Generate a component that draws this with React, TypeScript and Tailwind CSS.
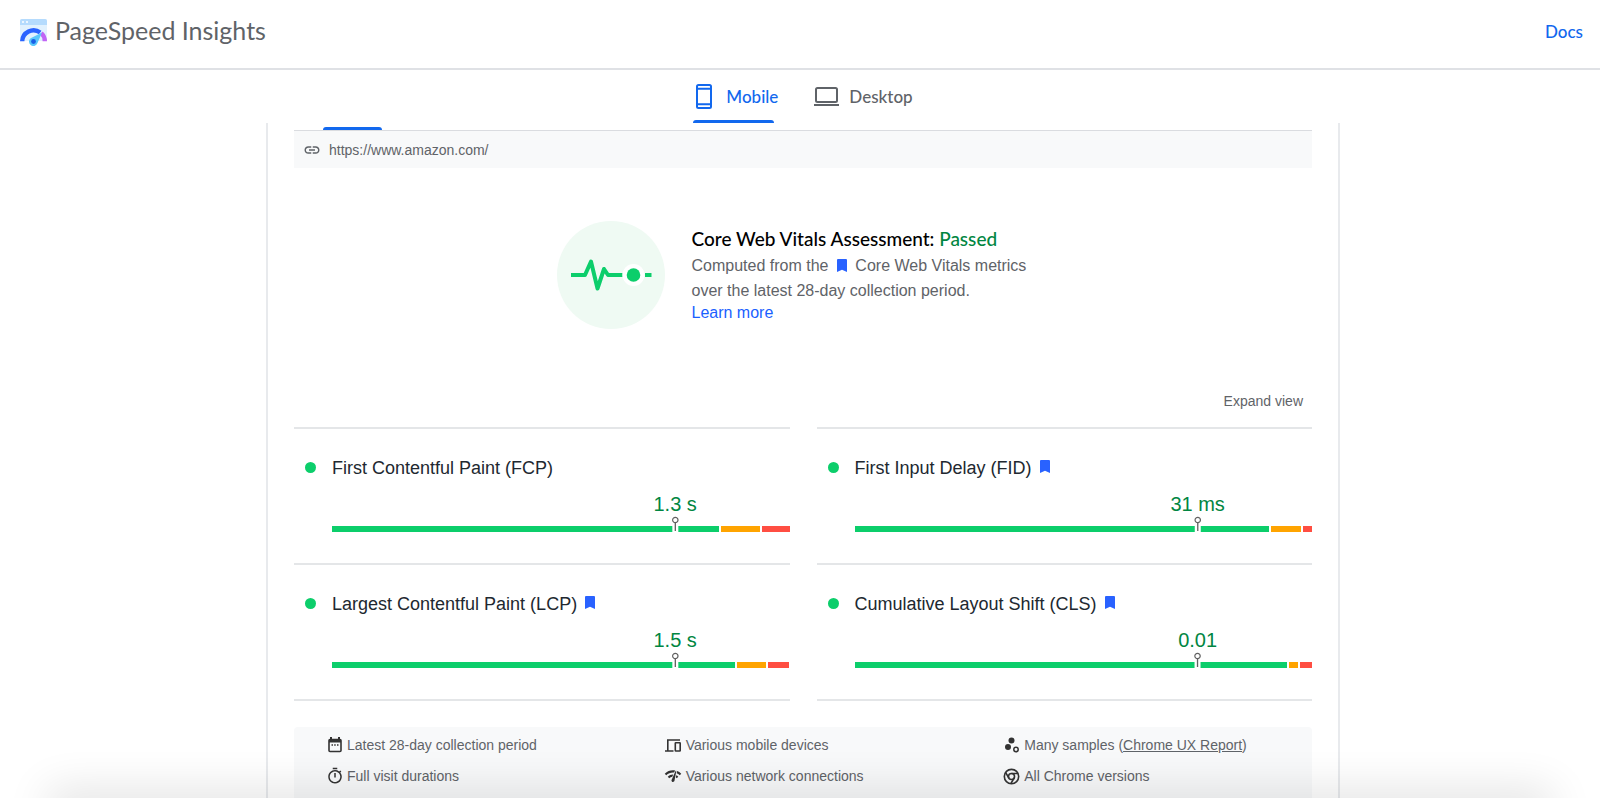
import type { ReactNode } from 'react';
import { MdLink, MdNetworkCheck, MdOutlineTimer } from 'react-icons/md';

interface Metric {
  name: string;
  value: string;
  core: boolean;
  good: number;
  average: number;
  poor: number;
}

const METRICS: Metric[] = [
  { name: 'First Contentful Paint (FCP)', value: '1.3 s', core: false, good: 387, average: 39, poor: 27 },
  { name: 'First Input Delay (FID)', value: '31 ms', core: true, good: 414, average: 30, poor: 9 },
  { name: 'Largest Contentful Paint (LCP)', value: '1.5 s', core: true, good: 403, average: 29, poor: 21 },
  { name: 'Cumulative Layout Shift (CLS)', value: '0.01', core: true, good: 432, average: 9, poor: 12 },
];

function Logo() {
  return (
    <svg viewBox="0 0 27 27" className="size-[27px]" aria-hidden="true">
      <path d="M0 2a2 2 0 0 1 2-2h23a2 2 0 0 1 2 2v20H0z" fill="#e1f1fe" />
      <path d="M0 2a2 2 0 0 1 2-2h23a2 2 0 0 1 2 2v4H0z" fill="#b5dbfd" />
      <circle cx="3" cy="3" r="1" fill="#fff" />
      <circle cx="7" cy="3" r="1" fill="#fff" />
      <path d="M2.2 22.3a11.3 11.3 0 0 1 18-8.8" fill="none" stroke="#2962ff" strokeWidth="4.4" />
      <path d="M21.2 14a11.3 11.3 0 0 1 3.6 8.3" fill="none" stroke="#c165f5" strokeWidth="4.4" />
      <path d="M22 13.5l-4.4 10.3a4.4 4.4 0 1 1-7-4.6z" fill="#5ac8fb" />
      <circle cx="13.5" cy="22.5" r="2.4" fill="#1a5fe8" />
    </svg>
  );
}

function PhoneIcon() {
  return (
    <svg viewBox="0 0 16 25" className="h-[25px] w-4" fill="none" stroke="currentColor" strokeWidth="2" aria-hidden="true">
      <rect x="1" y="1" width="14" height="23" rx="1.5" />
      <path d="M1 4.7h14M1 20.3h14" />
    </svg>
  );
}

function LaptopIcon() {
  return (
    <svg viewBox="0 0 25 19" className="h-[19px] w-[25px]" fill="none" stroke="currentColor" strokeWidth="2" aria-hidden="true">
      <rect x="2" y="1" width="21" height="14" rx="1.5" />
      <path d="M0 18h25" />
    </svg>
  );
}

function Bookmark() {
  return (
    <svg viewBox="0 0 10 13" className="inline-block h-[13px] w-[10px] align-[-1px]" aria-hidden="true">
      <path d="M0 1a1 1 0 0 1 1-1h8a1 1 0 0 1 1 1v12l-5-2.3L0 13z" fill="#2962ff" />
    </svg>
  );
}

function Pulse() {
  return (
    <svg viewBox="0 0 108 108" className="size-[108px] shrink-0" aria-hidden="true">
      <circle cx="54" cy="54" r="54" fill="#effaf3" />
      <path
        d="M14 54h14l6-13.500 6.500 27 6.500-19.500 4 6h14.500"
        fill="none"
        stroke="#0cce6b"
        strokeWidth="4"
        strokeLinejoin="round"
      />
      <circle cx="76.5" cy="54" r="11" fill="#fff" />
      <circle cx="76.5" cy="54" r="6.8" fill="#0cce6b" />
      <path d="M88 54h6.5" stroke="#0cce6b" strokeWidth="4" />
    </svg>
  );
}

function CalendarIcon() {
  return (
    <svg viewBox="0 0 14 16" className="h-4 w-[14px]" aria-hidden="true">
      <path d="M3 0v3M11 0v3" stroke="#333" strokeWidth="2" />
      <rect x="1" y="2.5" width="12" height="12" rx="1" fill="none" stroke="#333" strokeWidth="1.6" />
      <path d="M1 2.5h12v3H1z" fill="#333" />
      <path d="M3.5 8H5M6.2 8h1.5M9 8h1.5" stroke="#333" strokeWidth="1.5" />
    </svg>
  );
}

function DevicesIcon() {
  return (
    <svg viewBox="0 0 16 13" className="h-[13px] w-4" fill="none" stroke="#333" strokeWidth="1.6" aria-hidden="true">
      <path d="M15 1H2.8v10.5M0 12h8.5" />
      <rect x="10.3" y="3.8" width="4.9" height="8.2" rx="0.5" />
    </svg>
  );
}

function SamplesIcon() {
  return (
    <svg viewBox="0 0 14 16" className="h-4 w-[14px]" fill="#333" aria-hidden="true">
      <circle cx="6.5" cy="3.5" r="3" />
      <circle cx="3" cy="10" r="3" />
      <circle cx="11" cy="12.5" r="2.2" fill="none" stroke="#333" strokeWidth="1.5" />
    </svg>
  );
}

function ChromeIcon() {
  return (
    <svg viewBox="0 0 18 18" className="size-[17px]" fill="none" stroke="#333" strokeWidth="1.7" aria-hidden="true">
      <circle cx="9" cy="9" r="7.6" />
      <circle cx="9" cy="9" r="3.2" />
      <path d="M9 5.8h7M6.2 10.6L2.7 4.6M11.8 10.6l-3.5 6" />
    </svg>
  );
}

function MetricCard({ metric }: { metric: Metric }) {
  return (
    <section className="flex h-[136px] gap-4 border-b-2 border-[#e4e6e8] pt-[27px] pl-[11px]">
      <span className="mt-[6px] size-[11px] shrink-0 rounded-full bg-[#0cce6b]" />
      <div className="min-w-0 flex-1">
        <h3 className="flex items-center gap-2 text-lg leading-6 text-[#212830]">
          {metric.name}
          {metric.core && <span className="-mt-1 flex"><Bookmark /></span>}
        </h3>
        <div className="relative mt-[46px] flex h-[6px] gap-[2px]">
          <div className="bg-[#0cce6b]" style={{ flexGrow: metric.good }} />
          <div className="bg-[#ffa400]" style={{ flexGrow: metric.average }} />
          <div className="bg-[#ff4e42]" style={{ flexGrow: metric.poor }} />
          <div className="absolute bottom-0 left-3/4 flex -translate-x-1/2 flex-col items-center">
            <span className="text-xl leading-6 whitespace-nowrap text-[#018642]">{metric.value}</span>
            <svg viewBox="0 0 8 16" className="h-4 w-2" aria-hidden="true">
              <path d="M1 10h6v6H1z" fill="#fff" />
              <circle cx="4" cy="4" r="2.7" fill="#fff" stroke="#616161" strokeWidth="1.2" />
              <path d="M4 7v8" stroke="#616161" strokeWidth="1.3" />
            </svg>
          </div>
        </div>
      </div>
    </section>
  );
}

function Fact({ icon, children }: { icon: ReactNode; children: ReactNode }) {
  return (
    <li className="flex items-center gap-1">
      <span className="flex w-[17px] shrink-0 justify-center text-[#333]">{icon}</span>
      <span>{children}</span>
    </li>
  );
}

export default function App() {
  return (
    <div className="relative h-screen overflow-hidden bg-white font-['Liberation_Sans',Arial,sans-serif] text-[#5f6368]">
      <header className="flex h-[70px] items-center justify-between border-b-2 border-[#dfe1e5] pr-[17px] pb-1 pl-5">
        <div className="flex items-center gap-2">
          <Logo />
          <h1 className="pb-1 font-['Lato',sans-serif] text-[25px] leading-8">PageSpeed Insights</h1>
        </div>
        <a href="#docs" className="font-['Lato',sans-serif] text-[17px] font-medium text-[#1268ee]">Docs</a>
      </header>

      <div className="pl-[6px]">
        <nav className="flex h-[53px] justify-center gap-9 font-['Lato',sans-serif] text-[17px] font-medium">
          <button className="flex flex-col justify-between pt-[14px] text-[#1268ee]">
            <span className="flex items-center gap-[14px] pl-[3px]">
              <PhoneIcon />
              Mobile
            </span>
            <span className="h-[3px] w-[81px] rounded-t bg-[#1268ee]" />
          </button>
          <button className="flex items-center gap-[10px]">
            <LaptopIcon />
            Desktop
          </button>
        </nav>

        <main className="mx-auto w-full max-w-[1074px] border-x-2 border-[#e8eaed] px-[26px]">
          <div className="flex h-2 items-end border-b border-[#dadce0] pl-[29px]">
            <div className="h-[3px] w-[59px] rounded-t bg-[#1268ee]" />
          </div>
          <div className="flex h-[37px] items-center gap-2 bg-[#f8f9fa] pl-[9px] text-sm">
            <MdLink className="size-[18px]" />
            https://www.amazon.com/
          </div>

          <div className="flex items-center justify-center gap-[27px] pt-[53px]">
            <Pulse />
            <div className="w-[358px] text-base">
              <h2 className="pb-[2px] font-['Lato',sans-serif] text-[19px] leading-6 font-medium text-black">
                Core Web Vitals Assessment: <span className="text-[#018642]">Passed</span>
              </h2>
              <p className="leading-[25px]">
                Computed from the <span className="mx-1"><Bookmark /></span> Core Web Vitals metrics
                <br />
                over the latest 28-day collection period.
              </p>
              <a href="#learn" className="block leading-5 text-[#1a5fff]">Learn more</a>
            </div>
          </div>

          <div className="flex h-[98px] items-end justify-end pr-[9px] pb-4">
            <button className="text-sm">Expand view</button>
          </div>

          <div className="grid grid-cols-2 gap-x-[27px]">
            <div className="h-[2px] bg-[#e4e6e8]" />
            <div className="h-[2px] bg-[#e4e6e8]" />
            {METRICS.map(metric => (
              <MetricCard key={metric.name} metric={metric} />
            ))}
          </div>

          <ul className="mt-[26px] grid h-[110px] grid-cols-[34fr_34fr_31fr] content-start gap-y-[11px] rounded bg-[#f8f9fa] pt-2 pl-8 text-sm">
            <Fact icon={<CalendarIcon />}>Latest 28-day collection period</Fact>
            <Fact icon={<DevicesIcon />}>Various mobile devices</Fact>
            <Fact icon={<SamplesIcon />}>
              Many samples (<a href="#crux" className="underline">Chrome UX Report</a>)
            </Fact>
            <Fact icon={<MdOutlineTimer className="size-[18px] shrink-0" />}>Full visit durations</Fact>
            <Fact icon={<MdNetworkCheck className="size-[18px] shrink-0" />}>Various network connections</Fact>
            <Fact icon={<ChromeIcon />}>All Chrome versions</Fact>
          </ul>
        </main>
      </div>

      {/* soft shade along the bottom edge of the window */}
      <div className="pointer-events-none absolute inset-x-14 -bottom-5 h-5 shadow-[0_0_44px_8px_rgba(0,0,0,0.12)]" />
    </div>
  );
}
